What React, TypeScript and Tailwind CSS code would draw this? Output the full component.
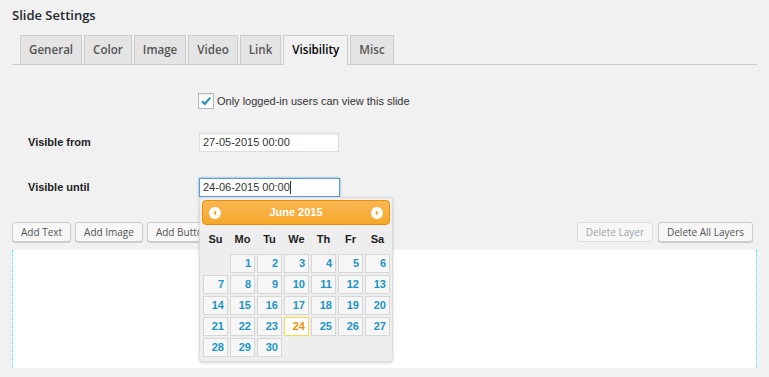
const tabs = ["General", "Color", "Image", "Video", "Link", "Visibility", "Misc"];

const days: (number | null)[] = [
  null, 1, 2, 3, 4, 5, 6,
  7, 8, 9, 10, 11, 12, 13,
  14, 15, 16, 17, 18, 19, 20,
  21, 22, 23, 24, 25, 26, 27,
  28, 29, 30,
];

function NavIcon({ dir }: { dir: "prev" | "next" }) {
  return (
    <svg width="12" height="12" viewBox="0 0 12 12">
      <circle cx="6" cy="6" r="6" fill="#fff" />
      {dir === "prev" ? (
        <path d="M7.2 3.3 L4.3 6 L7.2 8.7 Z" fill="#f6a828" />
      ) : (
        <path d="M4.8 3.3 L7.7 6 L4.8 8.7 Z" fill="#f6a828" />
      )}
    </svg>
  );
}

function Calendar() {
  return (
    <div className="absolute left-0 top-[19px] w-[194px] h-[165px] bg-[#eeeeee] border border-[#dddddd] rounded-[3px] p-[2px] shadow-[0_1px_3px_rgba(0,0,0,0.18)] font-['Liberation_Sans',Arial,sans-serif] z-10">
      <div className="h-[25px] rounded-[4px] border border-[#e78f08] bg-gradient-to-b from-[#f9b752] to-[#f6a828] flex items-center justify-between px-[6px] text-white text-[11px] font-bold">
        <NavIcon dir="prev" />
        <span>June 2015</span>
        <NavIcon dir="next" />
      </div>
      <div className="ml-px grid grid-cols-[repeat(7,25px)] gap-x-[2px] h-[29px] items-center text-[11px] font-bold text-[#222]">
        {["Su", "Mo", "Tu", "We", "Th", "Fr", "Sa"].map((d) => (
          <div key={d} className="text-center">
            {d}
          </div>
        ))}
      </div>
      <div className="ml-px grid grid-cols-[repeat(7,25px)] auto-rows-[19px] gap-[2px] text-[11px] font-bold">
        {days.map((d, i) =>
          d === null ? (
            <div key={i} />
          ) : d === 24 ? (
            <div
              key={i}
              className="border border-[#fbd850] bg-white text-[#eb8f00] text-right pr-[3px] leading-[17px]"
            >
              {d}
            </div>
          ) : (
            <div
              key={i}
              className="border border-[#d6d6d6] bg-[#f6f6f6] text-[#1c94c4] text-right pr-[3px] leading-[17px]"
            >
              {d}
            </div>
          )
        )}
      </div>
    </div>
  );
}

function Btn({ label, disabled }: { label: string; disabled?: boolean }) {
  return (
    <div
      className={
        disabled
          ? "h-[20px] px-[8px] flex items-center border border-[#dddddd] bg-[#f7f7f7] rounded-[3px] text-[10px] text-[#a0a5aa] whitespace-nowrap"
          : "h-[20px] px-[8px] flex items-center border border-[#cccccc] bg-[#f7f7f7] rounded-[3px] shadow-[0_1px_0_#cccccc] text-[10px] text-[#555] whitespace-nowrap"
      }
    >
      {label}
    </div>
  );
}

export default function App() {
  return (
    <div className="w-[769px] h-[377px] bg-[#f1f1f1] px-[12px] overflow-hidden font-['Open_Sans',sans-serif]">
      <h2 className="pt-[6px] text-[13px] leading-[18px] font-semibold text-[#23282d]">
        Slide Settings
      </h2>

      <div className="mt-[11px] flex items-end gap-[2px] pl-[8px] border-b border-[#cccccc]">
        {tabs.map((t) =>
          t === "Visibility" ? (
            <div
              key={t}
              className="h-[30px] -mb-px pb-px flex items-center px-[8px] border border-b-0 border-[#cccccc] bg-[#f1f1f1] text-[11.6px] font-semibold text-black"
            >
              {t}
            </div>
          ) : (
            <div
              key={t}
              className="h-[29px] flex items-center px-[8px] border border-b-0 border-[#cccccc] bg-[#e4e4e4] text-[11.6px] font-semibold text-[#555]"
            >
              {t}
            </div>
          )
        )}
      </div>

      <div className="font-['Liberation_Sans',Arial,sans-serif] text-[11px] text-[#333]">
        <div className="mt-[28px] h-[16px] flex items-center">
          <div className="w-[186px]" />
          <div className="w-[16px] h-[16px] border border-[#b4b9be] bg-white shadow-[inset_0_1px_2px_rgba(0,0,0,0.1)] flex items-center justify-center">
            <svg width="12" height="12" viewBox="0 0 12 12">
              <path d="M2 6.2 L4.8 9 L10.2 2.6" fill="none" stroke="#1e8cbe" strokeWidth="2" />
            </svg>
          </div>
          <span className="ml-[3px]">Only logged-in users can view this slide</span>
        </div>

        <div className="mt-[24px] h-[19px] flex items-center">
          <div className="w-[186px] pl-[16px] font-bold text-[#222]">Visible from</div>
          <div className="ml-px w-[140px] h-[19px] border border-[#dddddd] bg-white shadow-[inset_0_1px_2px_rgba(0,0,0,0.07)] pl-[3px] flex items-center">
            27-05-2015 00:00
          </div>
        </div>

        <div className="mt-[26px] h-[19px] flex items-center">
          <div className="w-[186px] pl-[16px] font-bold text-[#222]">Visible until</div>
          <div className="relative ml-px">
            <div className="w-[141px] h-[19px] border border-[#5b9dd9] bg-white shadow-[0_0_2px_rgba(30,140,190,0.8)] pl-[3px] flex items-center">
              24-06-2015 00:00
              <span className="inline-block w-px h-[13px] bg-[#333]" />
            </div>
            <Calendar />
          </div>
        </div>
      </div>

      <div className="mt-[25px] flex items-center justify-between pr-[4px]">
        <div className="flex gap-[4px]">
          <Btn label="Add Text" />
          <Btn label="Add Image" />
          <Btn label="Add Button" />
        </div>
        <div className="flex gap-[5px]">
          <Btn label="Delete Layer" disabled />
          <Btn label="Delete All Layers" />
        </div>
      </div>

      <div className="mt-[8px] h-[118px] bg-white border-x border-dotted border-[#33e6ee]" />
    </div>
  );
}
